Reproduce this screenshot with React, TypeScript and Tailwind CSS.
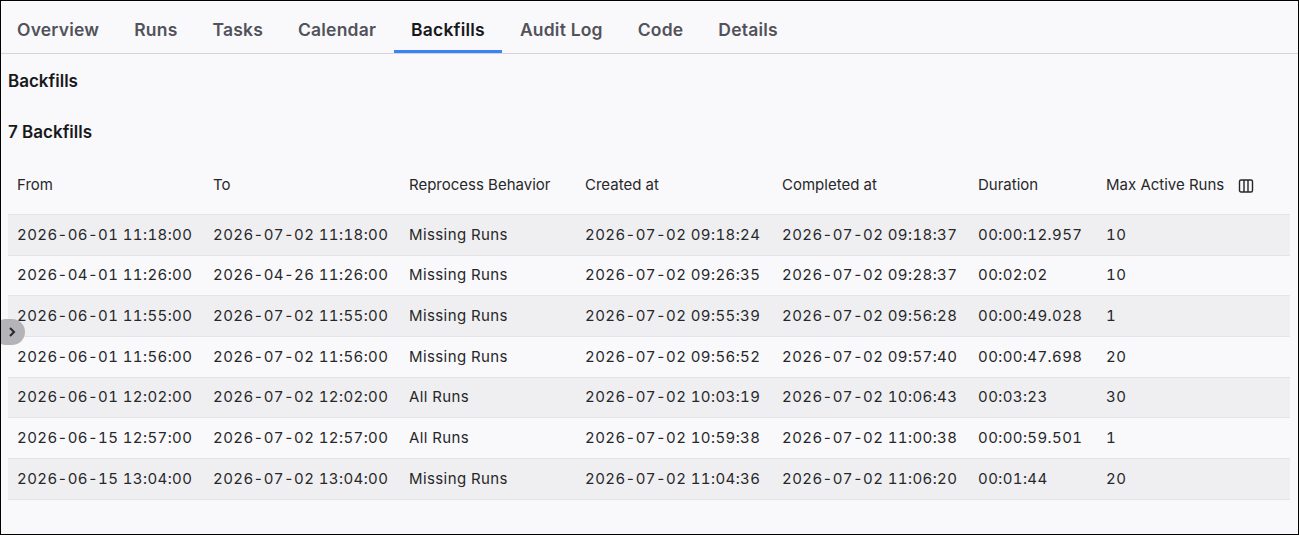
import React from "react";

const rows = [
  ["2026-06-01 11:18:00","2026-07-02 11:18:00","Missing Runs","2026-07-02 09:18:24","2026-07-02 09:18:37","00:00:12.957","10"],
  ["2026-04-01 11:26:00","2026-04-26 11:26:00","Missing Runs","2026-07-02 09:26:35","2026-07-02 09:28:37","00:02:02","10"],
  ["2026-06-01 11:55:00","2026-07-02 11:55:00","Missing Runs","2026-07-02 09:55:39","2026-07-02 09:56:28","00:00:49.028","1"],
  ["2026-06-01 11:56:00","2026-07-02 11:56:00","Missing Runs","2026-07-02 09:56:52","2026-07-02 09:57:40","00:00:47.698","20"],
  ["2026-06-01 12:02:00","2026-07-02 12:02:00","All Runs","2026-07-02 10:03:19","2026-07-02 10:06:43","00:03:23","30"],
  ["2026-06-15 12:57:00","2026-07-02 12:57:00","All Runs","2026-07-02 10:59:38","2026-07-02 11:00:38","00:00:59.501","1"],
  ["2026-06-15 13:04:00","2026-07-02 13:04:00","Missing Runs","2026-07-02 11:04:36","2026-07-02 11:06:20","00:01:44","20"],
];
const widths = ["w-[196px]","w-[196px]","w-[176px]","w-[197px]","w-[196px]","w-[128px]","w-[192px]"];
const heads = ["From","To","Reprocess Behavior","Created at","Completed at","Duration","Max Active Runs"];
const tabs = ["Overview","Runs","Tasks","Calendar","Backfills","Audit Log","Code","Details"];

export default function App() {
  return (
    <div className="w-[1299px] h-[535px] bg-[#f9f9fb] border border-black overflow-hidden relative text-[#27272a]" style={{ fontFamily: "Inter, 'Noto Sans', sans-serif" }}>
      <div className="flex h-[53px] border-b border-[#d4d4d8] pl-[-2px]">
        {tabs.map((t) => (
          <div key={t} className={`px-[17.5px] first:pl-[16px] flex items-center text-[17.5px] font-semibold tracking-[0.2px] pt-[6px] ${t === "Backfills" ? "text-[#18181b] border-b-[3px] border-[#3b82f6] pt-[9px]" : "text-[#52525b]"}`}>{t}</div>
        ))}
      </div>
      <div className="px-[7px]">
        <div className="text-[17px] font-semibold text-[#18181b] mt-[15px] h-[22px]">Backfills</div>
        <div className="text-[17px] font-semibold text-[#18181b] mt-[29px] h-[22px]">7 Backfills</div>
        <div className="mt-[15px] w-[1282px]">
          <div className="flex h-[58px] items-center border-b border-[#e4e4e7]">
            {heads.map((h, i) => (
              <div key={h} className={`${widths[i]} pl-[9px] text-[15px] text-[#27272a] flex items-center gap-[14px]`}>
                {h}
                {i === 6 && (
                  <svg width="16" height="16" viewBox="0 0 16 16" fill="none" stroke="#27272a" strokeWidth="1.4"><rect x="1.5" y="2" width="13" height="12" rx="1.5"/><path d="M6 2v12M10 2v12"/></svg>
                )}
              </div>
            ))}
          </div>
          {rows.map((r, ri) => (
            <div key={ri} className={`flex h-[40.7px] items-center border-b border-[#e4e4e7] ${ri % 2 === 0 ? "bg-[#efeff1]" : "bg-[#f9f9fb]"}`}>
              {r.map((c, i) => (
                <div key={i} className={`${widths[i]} pl-[9px] text-[15px] text-[#27272a] tabular-nums tracking-[0.4px]`}>{c}</div>
              ))}
            </div>
          ))}
        </div>
      </div>
      <div className="absolute left-[-8px] top-[318px] w-[32px] h-[26px] rounded-full bg-[#b4b4b8] flex items-center justify-end pr-[8px]">
        <svg width="10" height="12" viewBox="0 0 10 12" fill="none" stroke="#27272a" strokeWidth="2"><path d="M3 2l4 4-4 4"/></svg>
      </div>
    </div>
  );
}
